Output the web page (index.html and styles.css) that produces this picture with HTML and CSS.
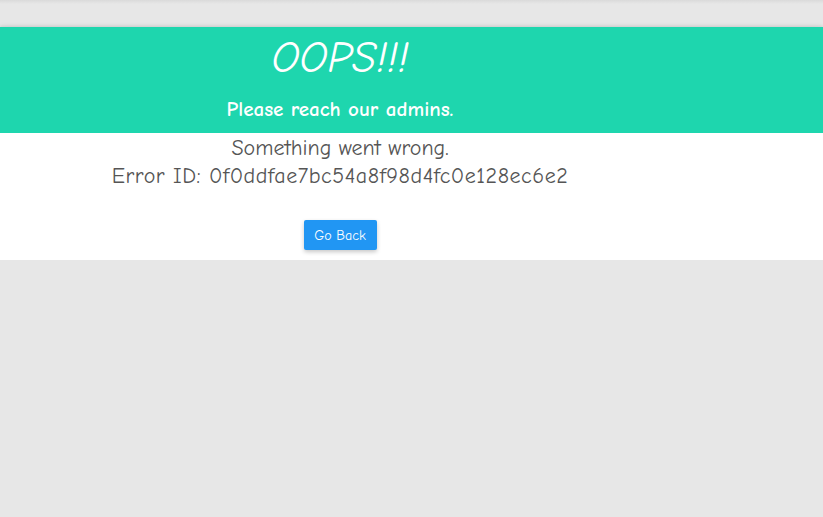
FILE: index.html
```html
<!DOCTYPE html>
<html>
<head>
<meta charset="utf-8">
<link rel="stylesheet" href="styles.css">
</head>
<body>
<div class="topbar"></div>
<div class="card">
  <div class="hero">
    <div class="col">
      <h1 class="title">OOPS!!!</h1>
      <h3 class="subtitle">Please reach our admins.</h3>
    </div>
  </div>
  <div class="body">
    <div class="col">
      <p class="msg">Something went wrong.<br><span class="errid">Error ID: 0f0ddfae7bc54a8f98d4fc0e128ec6e2</span></p>
      <button class="btn">Go Back</button>
    </div>
  </div>
</div>
</body>
</html>
```

FILE: styles.css
```css
html, body {
  margin: 0;
  padding: 0;
  background: #e7e7e7;
  font-family: "Comic Sans MS", "Comic Neue", "Open Sans", sans-serif;
}
.topbar {
  height: 27px;
  background: linear-gradient(#dadada, #e7e7e7 4px);
}
.card {
  background: #fff;
  box-shadow: 0 4px 8px rgba(0,0,0,0.28), 0 -1px 3px rgba(0,0,0,0.08);
}
.col {
  width: 680px;
  display: flex;
  flex-direction: column;
  align-items: center;
  text-align: center;
}
.hero {
  background: #1ed6ae;
  height: 106px;
}
.title {
  margin: 7px 0 0;
  font-size: 44px;
  font-weight: normal;
  font-style: italic;
  line-height: 48px;
  color: #fff;
}
.subtitle {
  margin: 13px 0 0;
  font-size: 21px;
  font-weight: bold;
  line-height: 28px;
  color: #fff;
}
.body {
  height: 127px;
}
.msg {
  margin: 1px 0 0;
  font-size: 22px;
  line-height: 28px;
  color: #555;
}
.errid {
  letter-spacing: 0.55px;
}
.btn {
  margin-top: 30px;
  width: 73px;
  height: 30px;
  border: none;
  border-radius: 2px;
  background: #2196f3;
  color: #fff;
  font-family: inherit;
  font-size: 14px;
  font-weight: normal;
  box-shadow: 0 2px 4px rgba(0,0,0,0.22);
  padding: 0;
}
```
